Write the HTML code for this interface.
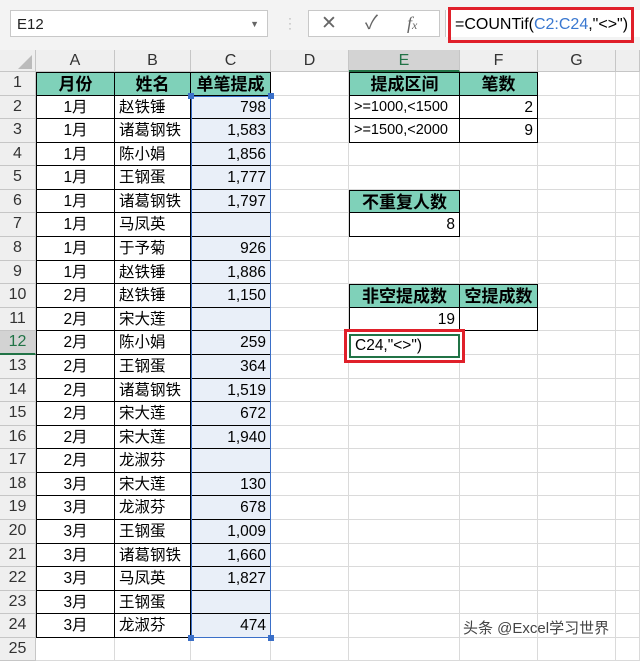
<!DOCTYPE html><html><head><meta charset="utf-8"><style>
body{margin:0;width:640px;height:648px;overflow:hidden;background:#fff;font-family:"Liberation Sans","Noto Sans CJK SC",sans-serif;position:relative}
.tb{position:absolute;left:0;top:0;width:640px;height:50px;background:#f3f3f3}
.nb{position:absolute;left:10px;top:10px;width:258px;height:27px;background:#fff;border:1px solid #c8c8c8;font-size:15px;line-height:27px;padding-left:6px;box-sizing:border-box;color:#222}
.ic{position:absolute;left:308px;top:10px;width:132px;height:27px;background:#fff;border:1px solid #c8c8c8;box-sizing:border-box;color:#666;font-size:19px}
.fx{position:absolute;left:445px;top:10px;width:195px;height:27px;background:#fff;border-left:1px solid #c8c8c8}
.fb{position:absolute;left:448px;top:7px;width:186px;height:36px;border:3px solid #e0202a;box-sizing:border-box;font-size:16px;line-height:30px;padding-left:4px;white-space:nowrap}
.g{position:absolute;left:0;top:50px;display:grid;grid-template-columns:36px 79px 76px 80px 78px 111px 78px 78px 24px;grid-template-rows:22px repeat(25,23.58px)}
.g div{border-right:1px solid #dadada;border-bottom:1px solid #dadada;box-sizing:border-box;font-size:15.5px;white-space:nowrap;overflow:hidden;line-height:23px;padding:0 4px}
.g .h{background:#efefef;text-align:center;color:#333;border-color:#c6c6c6;font-size:16px;line-height:22px}
.g .hs{background:#d3d3d3;color:#217346;border-bottom:2px solid #217346}
.c{text-align:center}.r{text-align:right}
.g .k{border-right:1px solid #000;border-bottom:1px solid #000}
.g .gr{background:#7fd1b9;font-weight:bold;text-align:center;font-size:17px}
.g .s{background:#e9eff8}
</style></head><body>
<div class="tb"></div>
<div class="nb">E12<span style="position:absolute;right:8px;font-size:9px;color:#666">▼</span></div>
<div style="position:absolute;left:288px;top:16px;color:#aaa;font-size:12px;line-height:5px">·<br>·<br>·</div>
<div class="ic"><span style="position:absolute;left:12px;top:0;line-height:25px">✕</span><span style="position:absolute;left:56px;top:0;line-height:25px">✓</span><span style="position:absolute;left:98px;top:0;line-height:25px;font-family:'Liberation Serif';font-style:italic;font-size:18px">f<small style="font-size:12px">x</small></span></div>
<div class="fx"></div>
<div class="fb">=COUNTif(<span style="color:#3a78d0">C2:C24</span>,"&lt;&gt;")</div>
<div class="g">
<div class="h"><span style="display:inline-block;width:0;height:0;border-left:14px solid transparent;border-bottom:14px solid #bbb;margin-top:5px;margin-left:14px"></span></div><div class="h">A</div><div class="h">B</div><div class="h">C</div><div class="h">D</div><div class="h hs">E</div><div class="h">F</div><div class="h">G</div><div class="h"></div>
<div class="h">1</div><div class="k gr" style="border-top:1px solid #000;border-left:1px solid #000">月份</div><div class="k gr" style="border-top:1px solid #000">姓名</div><div class="k gr" style="border-top:1px solid #000">单笔提成</div><div></div><div class="k gr" style="border-top:1px solid #000;border-left:1px solid #000">提成区间</div><div class="k gr" style="border-top:1px solid #000">笔数</div><div></div><div></div>
<div class="h">2</div><div class="k c" style="border-left:1px solid #000">1月</div><div class="k">赵铁锤</div><div class="k s r">798</div><div></div><div class="k" style="border-left:1px solid #000;font-size:14.5px">&gt;=1000,&lt;1500</div><div class="k r">2</div><div></div><div></div>
<div class="h">3</div><div class="k c" style="border-left:1px solid #000">1月</div><div class="k">诸葛钢铁</div><div class="k s r">1,583</div><div></div><div class="k" style="border-left:1px solid #000;font-size:14.5px">&gt;=1500,&lt;2000</div><div class="k r">9</div><div></div><div></div>
<div class="h">4</div><div class="k c" style="border-left:1px solid #000">1月</div><div class="k">陈小娟</div><div class="k s r">1,856</div><div></div><div></div><div></div><div></div><div></div>
<div class="h">5</div><div class="k c" style="border-left:1px solid #000">1月</div><div class="k">王钢蛋</div><div class="k s r">1,777</div><div></div><div></div><div></div><div></div><div></div>
<div class="h">6</div><div class="k c" style="border-left:1px solid #000">1月</div><div class="k">诸葛钢铁</div><div class="k s r">1,797</div><div></div><div class="k gr" style="border-top:1px solid #000;border-left:1px solid #000">不重复人数</div><div></div><div></div><div></div>
<div class="h">7</div><div class="k c" style="border-left:1px solid #000">1月</div><div class="k">马凤英</div><div class="k s r"></div><div></div><div class="k r" style="border-left:1px solid #000">8</div><div></div><div></div><div></div>
<div class="h">8</div><div class="k c" style="border-left:1px solid #000">1月</div><div class="k">于予菊</div><div class="k s r">926</div><div></div><div></div><div></div><div></div><div></div>
<div class="h">9</div><div class="k c" style="border-left:1px solid #000">1月</div><div class="k">赵铁锤</div><div class="k s r">1,886</div><div></div><div></div><div></div><div></div><div></div>
<div class="h">10</div><div class="k c" style="border-left:1px solid #000">2月</div><div class="k">赵铁锤</div><div class="k s r">1,150</div><div></div><div class="k gr" style="border-top:1px solid #000;border-left:1px solid #000">非空提成数</div><div class="k gr" style="border-top:1px solid #000">空提成数</div><div></div><div></div>
<div class="h">11</div><div class="k c" style="border-left:1px solid #000">2月</div><div class="k">宋大莲</div><div class="k s r"></div><div></div><div class="k r" style="border-left:1px solid #000">19</div><div class="k"></div><div></div><div></div>
<div class="h hs">12</div><div class="k c" style="border-left:1px solid #000">2月</div><div class="k">陈小娟</div><div class="k s r">259</div><div></div><div></div><div></div><div></div><div></div>
<div class="h">13</div><div class="k c" style="border-left:1px solid #000">2月</div><div class="k">王钢蛋</div><div class="k s r">364</div><div></div><div></div><div></div><div></div><div></div>
<div class="h">14</div><div class="k c" style="border-left:1px solid #000">2月</div><div class="k">诸葛钢铁</div><div class="k s r">1,519</div><div></div><div></div><div></div><div></div><div></div>
<div class="h">15</div><div class="k c" style="border-left:1px solid #000">2月</div><div class="k">宋大莲</div><div class="k s r">672</div><div></div><div></div><div></div><div></div><div></div>
<div class="h">16</div><div class="k c" style="border-left:1px solid #000">2月</div><div class="k">宋大莲</div><div class="k s r">1,940</div><div></div><div></div><div></div><div></div><div></div>
<div class="h">17</div><div class="k c" style="border-left:1px solid #000">2月</div><div class="k">龙淑芬</div><div class="k s r"></div><div></div><div></div><div></div><div></div><div></div>
<div class="h">18</div><div class="k c" style="border-left:1px solid #000">3月</div><div class="k">宋大莲</div><div class="k s r">130</div><div></div><div></div><div></div><div></div><div></div>
<div class="h">19</div><div class="k c" style="border-left:1px solid #000">3月</div><div class="k">龙淑芬</div><div class="k s r">678</div><div></div><div></div><div></div><div></div><div></div>
<div class="h">20</div><div class="k c" style="border-left:1px solid #000">3月</div><div class="k">王钢蛋</div><div class="k s r">1,009</div><div></div><div></div><div></div><div></div><div></div>
<div class="h">21</div><div class="k c" style="border-left:1px solid #000">3月</div><div class="k">诸葛钢铁</div><div class="k s r">1,660</div><div></div><div></div><div></div><div></div><div></div>
<div class="h">22</div><div class="k c" style="border-left:1px solid #000">3月</div><div class="k">马凤英</div><div class="k s r">1,827</div><div></div><div></div><div></div><div></div><div></div>
<div class="h">23</div><div class="k c" style="border-left:1px solid #000">3月</div><div class="k">王钢蛋</div><div class="k s r"></div><div></div><div></div><div></div><div></div><div></div>
<div class="h">24</div><div class="k c" style="border-left:1px solid #000">3月</div><div class="k">龙淑芬</div><div class="k s r">474</div><div></div><div></div><div></div><div></div><div></div>
<div class="h">25</div><div></div><div></div><div></div><div></div><div></div><div></div><div></div><div></div>
</div>
<div style="position:absolute;left:191px;top:96px;width:80px;height:542px;border:1.5px solid #3a6fc8;box-sizing:border-box"></div>
<div style="position:absolute;left:188px;top:93px;width:6px;height:6px;background:#3a6fc8"></div>
<div style="position:absolute;left:268px;top:93px;width:6px;height:6px;background:#3a6fc8"></div>
<div style="position:absolute;left:188px;top:635px;width:6px;height:6px;background:#3a6fc8"></div>
<div style="position:absolute;left:268px;top:635px;width:6px;height:6px;background:#3a6fc8"></div>
<div style="position:absolute;left:344px;top:329px;width:121px;height:34px;border:3px solid #e0202a;box-sizing:border-box;background:#fff"><div style="position:absolute;left:2px;top:2px;right:2px;bottom:2px;border:2px solid #217346;font-size:15.5px;line-height:20px;padding-left:4px">C24,"&lt;&gt;")</div></div>
<div style="position:absolute;left:463px;top:617px;font-size:15px;color:#444;font-family:'Liberation Sans','Noto Sans CJK SC',sans-serif">头条 @Excel学习世界</div>
</body></html>
